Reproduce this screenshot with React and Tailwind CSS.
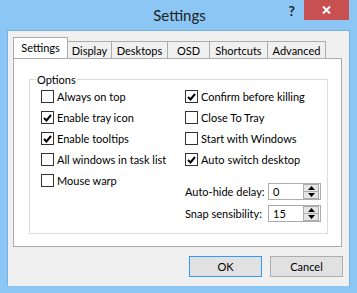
import React from "react";

const font = { fontFamily: "Lato, 'Liberation Sans', sans-serif" };

function Check({ checked, label }) {
  return (
    <div className="flex h-[21px] items-center">
      <div className="flex h-[13px] w-[13px] shrink-0 items-center justify-center border border-[#333] bg-white">
        {checked && (
          <svg width="9" height="8" viewBox="0 0 9 8">
            <path d="M1 4 L3.5 6.5 L8 1" fill="none" stroke="#000" strokeWidth="2" />
          </svg>
        )}
      </div>
      <span className="ml-[3px] whitespace-nowrap text-[11px] leading-none text-black">{label}</span>
    </div>
  );
}

function Spinner({ label, value }) {
  return (
    <div className="flex h-[17px] items-center">
      <span className="w-[83px] shrink-0 whitespace-nowrap text-[11px] leading-none text-black">{label}</span>
      <div className="flex h-[17px] w-[53px] items-center justify-between border border-[#adadad] bg-white pl-[4px] pr-[1px]">
        <span className="text-[11px] leading-none text-black">{value}</span>
        <div className="flex h-[15px] w-[16px] flex-col">
          <div className="flex h-[8px] items-center justify-center border border-[#acacac] bg-[#e5e5e5]">
            <svg width="7" height="4" viewBox="0 0 7 4">
              <path d="M0 4 L3.5 0 L7 4 Z" fill="#000" />
            </svg>
          </div>
          <div className="flex h-[7px] items-center justify-center border border-t-0 border-[#acacac] bg-[#e5e5e5]">
            <svg width="7" height="4" viewBox="0 0 7 4">
              <path d="M0 0 L3.5 4 L7 0 Z" fill="#000" />
            </svg>
          </div>
        </div>
      </div>
    </div>
  );
}

const tabs = [
  { name: "Display", w: "w-[44px]" },
  { name: "Desktops", w: "w-[56px]" },
  { name: "OSD", w: "w-[42px]" },
  { name: "Shortcuts", w: "w-[58px]" },
  { name: "Advanced", w: "w-[58px]" },
];

export default function App() {
  return (
    <div className="flex h-[293px] w-[357px] flex-col bg-[#8bc6f5]" style={font}>
      {/* title bar */}
      <div className="relative flex h-[30px] items-start">
        <div className="flex h-[30px] flex-1 items-center justify-center pl-[2px]">
          <span className="text-[15px] leading-none text-[#222]">Settings</span>
        </div>
        <div className="absolute right-[8px] top-0 flex items-start">
          <span className="mr-[9px] mt-[4px] text-[14px] font-bold leading-none text-[#222]">?</span>
          <div className="flex h-[20px] w-[45px] items-center justify-center bg-[#c75050]">
            <svg width="9" height="8" viewBox="0 0 9 8">
              <path d="M1 0.5 L8 7.5 M8 0.5 L1 7.5" stroke="#fff" strokeWidth="2" />
            </svg>
          </div>
        </div>
      </div>

      {/* client */}
      <div className="mx-[7px] flex h-[256px] flex-col border border-b-0 border-[#7ab0de] bg-[#f0f0f0] px-[5px] pt-[7px]">
        <div className="flex h-[20px] items-end">
          <div className="relative z-10 flex h-[21px] w-[55px] items-start justify-center border border-b-0 border-[#acacac] bg-white pt-[4px]">
            <span className="text-[11px] leading-none text-black">Settings</span>
          </div>
          {tabs.map((t) => (
            <div
              key={t.name}
              className={`${t.w} flex h-[17px] items-start justify-center border border-b-0 border-l-0 border-[#acacac] bg-[#f0f0f0] pt-[3px]`}
            >
              <span className="text-[11px] leading-none text-black">{t.name}</span>
            </div>
          ))}
        </div>
        <div className="mr-[2px] h-[189px] border border-[#acacac] bg-white px-[15px] pt-[20px]">
          <div className="relative h-[155px] w-[299px] border border-[#dcdcdc] pl-[11px] pt-[6px]">
            <span className="absolute left-[6px] top-[-8px] bg-white px-[1px] text-[11px] leading-[15px] text-black">
              Options
            </span>
            <div className="flex">
              <div className="w-[144px]">
                <Check label="Always on top" />
                <Check checked label="Enable tray icon" />
                <Check checked label="Enable tooltips" />
                <Check label="All windows in task list" />
                <Check label="Mouse warp" />
              </div>
              <div>
                <Check checked label="Confirm before killing" />
                <Check label="Close To Tray" />
                <Check label="Start with Windows" />
                <Check checked label="Auto switch desktop" />
                <div className="mt-[13px] flex flex-col gap-[5px]">
                  <Spinner label="Auto-hide delay:" value="0" />
                  <Spinner label="Snap sensibility:" value="15" />
                </div>
              </div>
            </div>
          </div>
        </div>
        <div className="mt-[9px] flex justify-end gap-[8px] pr-[1px]">
          <button className="flex h-[21px] w-[73px] items-center justify-center border border-[#3399ff] bg-[#e1e1e1] text-[11px] leading-none text-black">
            OK
          </button>
          <button className="flex h-[21px] w-[73px] items-center justify-center border border-[#adadad] bg-[#e1e1e1] text-[11px] leading-none text-black">
            Cancel
          </button>
        </div>
      </div>
    </div>
  );
}
